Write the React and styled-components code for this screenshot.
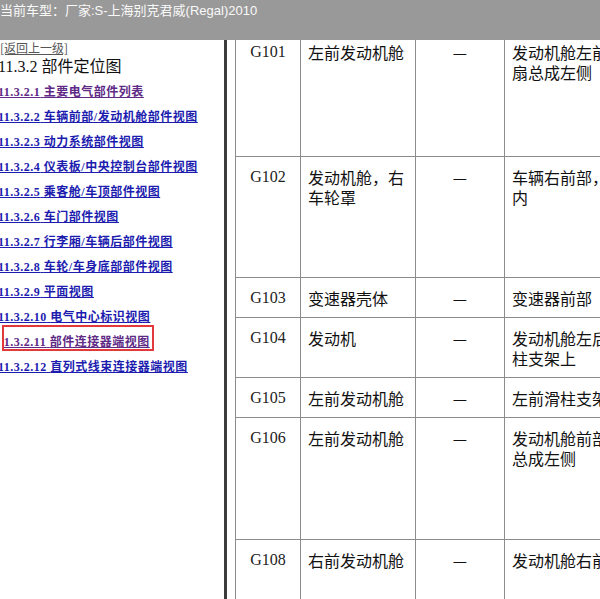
import React from 'react';
import styled, { createGlobalStyle } from 'styled-components';

const GlobalStyle = createGlobalStyle`
  html, body {
    margin: 0;
    padding: 0;
    overflow: hidden;
    background: #fff;
  }
`;

const Page = styled.div`
  display: flex;
  flex-direction: column;
  width: 600px;
  height: 599px;
  overflow: hidden;
`;

const TopBar = styled.div`
  height: 40px;
  flex-shrink: 0;
  background: #999999;
  color: #fafafa;
  font-family: "Liberation Sans", "Noto Sans CJK SC", sans-serif;
  font-size: 13px;
  line-height: 16px;
  padding-top: 3px;
  box-sizing: border-box;
  white-space: nowrap;
`;

const Main = styled.div`
  display: flex;
  flex: 1;
  min-height: 0;
`;

const Sidebar = styled.div`
  width: 224px;
  flex-shrink: 0;
  border-right: 3px solid #3c3c3c;
  overflow: hidden;
`;

const SideInner = styled.div`
  margin-left: -2px;
  display: flex;
  flex-direction: column;
`;

const BackLink = styled.a`
  font-family: "Noto Sans CJK SC", sans-serif;
  font-size: 12px;
  line-height: 15px;
  color: #555;
  text-decoration: underline;
  margin-left: 2px;
`;

const Heading = styled.div`
  font-family: "Liberation Serif", "Noto Sans CJK SC", serif;
  font-size: 16px;
  line-height: 22px;
  color: #111;
  margin-top: 1px;
`;

const NavItem = styled.div`
  position: relative;
  height: 25px;
  display: flex;
  align-items: center;
  white-space: nowrap;

  ${(p) =>
    p.$active &&
    `
    &::after {
      content: "";
      position: absolute;
      left: 4px;
      top: -3px;
      width: 152px;
      height: 26px;
      border: 2px solid #e23a3a;
      box-sizing: border-box;
      box-shadow: -4px 0 0 #fff;
    }
  `}
`;

const NavLink = styled.a`
  font-family: "Liberation Serif", "Noto Sans CJK SC", serif;
  font-weight: bold;
  font-size: 12px;
  letter-spacing: 0.5px;
  color: ${(p) => (p.$visited ? '#5e2a86' : '#1c1caf')};
  text-decoration: underline;
`;

const Content = styled.div`
  flex: 1;
  overflow: hidden;
  padding-left: 8px;
`;

const Table = styled.table`
  border-collapse: collapse;
  table-layout: fixed;
  width: 560px;
  margin-top: -9px;
  font-size: 16px;
  line-height: 20px;
`;

const Cell = styled.td`
  border: 1px solid #8c8c8c;
  padding: 10px 7px 9px;
  vertical-align: top;
  text-align: ${(p) => (p.$center ? 'center' : 'left')};
  font-family: ${(p) =>
    p.$code ? '"Liberation Serif", serif' : '"Noto Sans CJK SC", sans-serif'};
  color: ${(p) => (p.$code ? '#222' : '#111')};
  overflow: hidden;
`;

const PlaceLine = styled.div`
  white-space: nowrap;
`;

const navItems = [
  { num: '11.3.2.1', title: '主要电气部件列表', visited: true },
  { num: '11.3.2.2', title: '车辆前部/发动机舱部件视图' },
  { num: '11.3.2.3', title: '动力系统部件视图' },
  { num: '11.3.2.4', title: '仪表板/中央控制台部件视图' },
  { num: '11.3.2.5', title: '乘客舱/车顶部件视图' },
  { num: '11.3.2.6', title: '车门部件视图' },
  { num: '11.3.2.7', title: '行李厢/车辆后部件视图' },
  { num: '11.3.2.8', title: '车轮/车身底部部件视图' },
  { num: '11.3.2.9', title: '平面视图' },
  { num: '11.3.2.10', title: '电气中心标识视图' },
  { num: '11.3.2.11', title: '部件连接器端视图', visited: true, active: true },
  { num: '11.3.2.12', title: '直列式线束连接器端视图' },
];

const rows = [
  { code: 'G101', loc: '左前发动机舱', place: ['发动机舱左前风', '扇总成左侧'], h: 125 },
  { code: 'G102', loc: '发动机舱，右车轮罩', place: ['车辆右前部，前', '内'], h: 121 },
  { code: 'G103', loc: '变速器壳体', place: ['变速器前部'], h: 39 },
  { code: 'G104', loc: '发动机', place: ['发动机舱左后滑', '柱支架上'], h: 60 },
  { code: 'G105', loc: '左前发动机舱', place: ['左前滑柱支架上'], h: 38 },
  { code: 'G106', loc: '左前发动机舱', place: ['发动机舱前部风', '总成左侧'], h: 122 },
  { code: 'G108', loc: '右前发动机舱', place: ['发动机舱右前风扇'], h: 123 },
];

export default function App() {
  return (
    <Page>
      <GlobalStyle />
      <TopBar>当前车型：厂家:S-上海别克君威(Regal)2010</TopBar>
      <Main>
        <Sidebar>
          <SideInner>
            <BackLink href="#">[返回上一级]</BackLink>
            <Heading>11.3.2 部件定位图</Heading>
            {navItems.map((item) => (
              <NavItem key={item.num} $active={item.active}>
                <NavLink href="#" $visited={item.visited}>
                  {item.num} {item.title}
                </NavLink>
              </NavItem>
            ))}
          </SideInner>
        </Sidebar>
        <Content>
          <Table>
            <colgroup>
              <col style={{ width: 65 }} />
              <col style={{ width: 115 }} />
              <col style={{ width: 89 }} />
              <col style={{ width: 140 }} />
              <col />
            </colgroup>
            <tbody>
              {rows.map((r) => (
                <tr key={r.code} style={{ height: r.h }}>
                  <Cell $code $center>{r.code}</Cell>
                  <Cell>{r.loc}</Cell>
                  <Cell $center>—</Cell>
                  <Cell>
                    {r.place.map((line, i) => (
                      <PlaceLine key={i}>{line}</PlaceLine>
                    ))}
                  </Cell>
                  <Cell />
                </tr>
              ))}
            </tbody>
          </Table>
        </Content>
      </Main>
    </Page>
  );
}
